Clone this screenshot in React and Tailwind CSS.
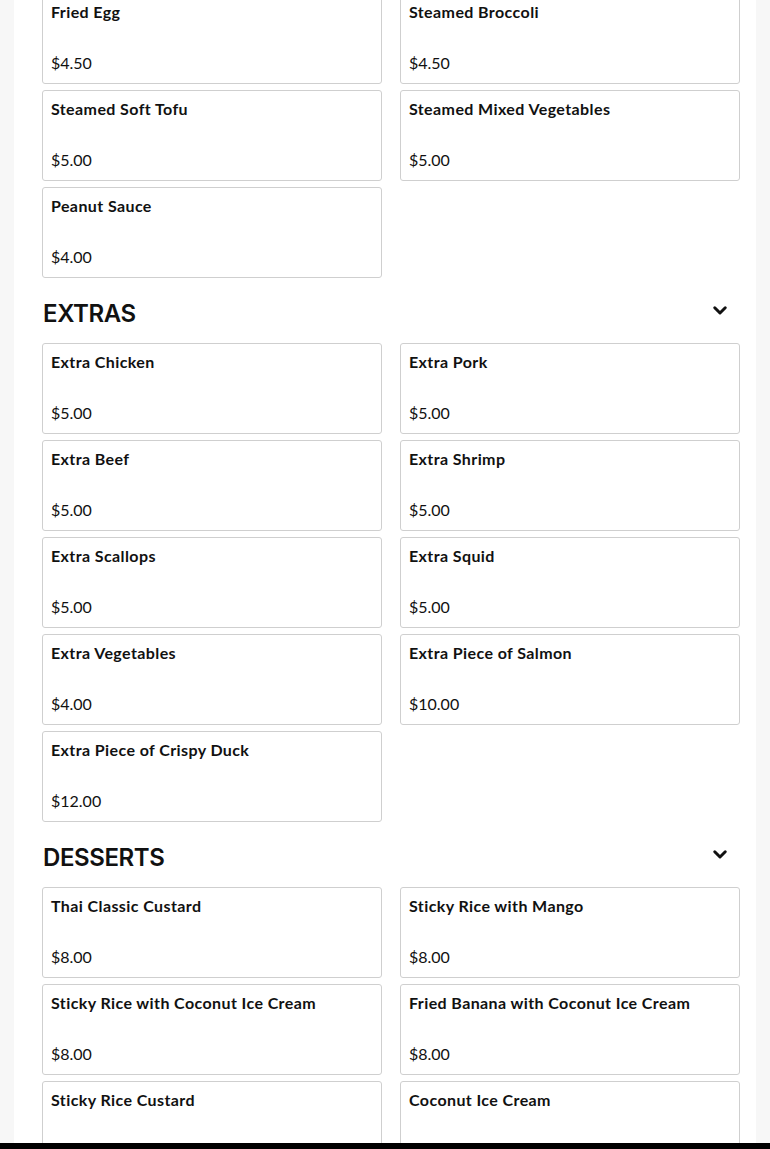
const sections = [
  {
    title: null,
    items: [
      ["Fried Egg", "$4.50"],
      ["Steamed Broccoli", "$4.50"],
      ["Steamed Soft Tofu", "$5.00"],
      ["Steamed Mixed Vegetables", "$5.00"],
      ["Peanut Sauce", "$4.00"],
    ],
  },
  {
    title: "EXTRAS",
    items: [
      ["Extra Chicken", "$5.00"],
      ["Extra Pork", "$5.00"],
      ["Extra Beef", "$5.00"],
      ["Extra Shrimp", "$5.00"],
      ["Extra Scallops", "$5.00"],
      ["Extra Squid", "$5.00"],
      ["Extra Vegetables", "$4.00"],
      ["Extra Piece of Salmon", "$10.00"],
      ["Extra Piece of Crispy Duck", "$12.00"],
    ],
  },
  {
    title: "DESSERTS",
    items: [
      ["Thai Classic Custard", "$8.00"],
      ["Sticky Rice with Mango", "$8.00"],
      ["Sticky Rice with Coconut Ice Cream", "$8.00"],
      ["Fried Banana with Coconut Ice Cream", "$8.00"],
      ["Sticky Rice Custard", "$8.00"],
      ["Coconut Ice Cream", "$8.00"],
    ],
  },
];

function Chevron() {
  return (
    <svg width="18" height="18" viewBox="0 0 24 24" fill="none" stroke="#111" strokeWidth="4" strokeLinecap="round" strokeLinejoin="round">
      <path d="M5 9l7 7 7-7" />
    </svg>
  );
}

function Item({ name, price }) {
  return (
    <div className="h-[91px] border border-[#cfcfcf] rounded-[3px] bg-white px-2 pt-[6px] pb-2 flex flex-col justify-between text-[#111]">
      <div className="text-[16px] leading-6 font-bold tracking-[0.4px]">{name}</div>
      <div className="text-[16px] leading-6">{price}</div>
    </div>
  );
}

export default function App() {
  return (
    <div className="min-h-[1149px] bg-[#f7f7f7] flex" style={{ fontFamily: "Lato, 'Noto Sans', sans-serif" }}>
      <div className="mx-[14px] flex-1 bg-white overflow-hidden h-[1149px]">
        <div className="pl-[28px] pr-[16px] mt-[-7px]">
          {sections.map((s, i) => (
            <div key={i}>
              {s.title && (
                <div className="flex items-center justify-between pt-[20px] pb-[13px] pl-[1px]">
                  <h2 className="text-[24px] leading-8 font-semibold tracking-[-0.4px] text-[#111]" style={{ fontFamily: "Inter, Lato, sans-serif" }}>
                    {s.title}
                  </h2>
                  <div className="mr-[11px] -mt-[8px]">
                    <Chevron />
                  </div>
                </div>
              )}
              <div className="grid grid-cols-2 gap-x-[18px] gap-y-[6px]">
                {s.items.map(([n, p]) => (
                  <Item key={n} name={n} price={p} />
                ))}
              </div>
            </div>
          ))}
        </div>
      </div>
      <div className="fixed bottom-0 left-0 right-0 h-[6px] bg-black" />
    </div>
  );
}
